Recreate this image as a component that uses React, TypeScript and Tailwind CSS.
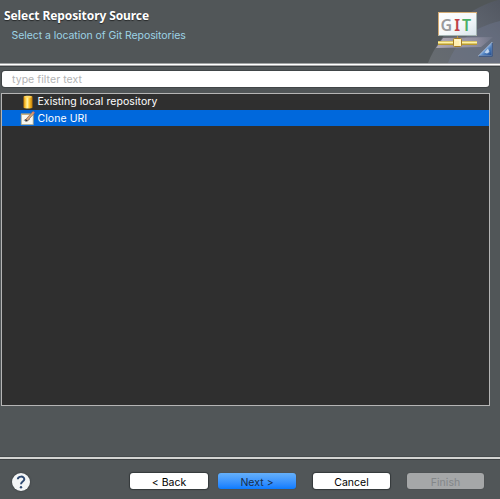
import React from "react";

function GitBanner() {
  return (
    <svg width="76" height="63" viewBox="0 0 76 63" className="shrink-0" aria-label="Git">
      <defs>
        <linearGradient id="sheen" x1="0" y1="1" x2="1" y2="0">
          <stop offset="0" stopColor="#676c70" />
          <stop offset="0.55" stopColor="#606670" />
          <stop offset="1" stopColor="#525761" />
        </linearGradient>
        <linearGradient id="card" x1="0" y1="0" x2="1" y2="1">
          <stop offset="0" stopColor="#ffffff" />
          <stop offset="0.55" stopColor="#f5f8fa" />
          <stop offset="1" stopColor="#d7e3ea" />
        </linearGradient>
        <linearGradient id="shadow" x1="0" y1="0" x2="1" y2="0">
          <stop offset="0" stopColor="#c8bdca" stopOpacity="0.75" />
          <stop offset="0.7" stopColor="#aaa3b5" stopOpacity="0.6" />
          <stop offset="1" stopColor="#a49fb5" stopOpacity="0.1" />
        </linearGradient>
        <linearGradient id="corner" x1="0" y1="0" x2="1" y2="1">
          <stop offset="0.4" stopColor="#a5c6ec" />
          <stop offset="0.65" stopColor="#4b7dbd" />
          <stop offset="1" stopColor="#1f4788" />
        </linearGradient>
      </defs>
      <path d="M4 63C15 35 39 10 74 0H76V63Z" fill="url(#sheen)" />
      <path d="M24 63C31 43 49 27 76 21V63Z" fill="#7986a4" opacity="0.28" />
      <path d="M12 48L19 38L69 37L57 47Z" fill="url(#shadow)" />
      <rect x="14.5" y="12.5" width="38" height="23" fill="url(#card)" stroke="#d6ad75" />
      <path d="M14.5 35.5H52.5V14" fill="none" stroke="#a3b4b3" />
      <g fontFamily="Noto Sans, sans-serif" fontSize="16" fontWeight="600">
        <text x="16.5" y="31" fill="#999a9c">G</text>
        <text x="30.2" y="31" fill="#be4248">I</text>
        <text x="38.1" y="31" fill="#4caf66">T</text>
      </g>
      <path d="M33.5 36V39" stroke="#bd9242" />
      <rect x="14" y="41" width="39" height="4" fill="#b9992d" />
      <path d="M14 42.5H53" stroke="#fff4a5" strokeWidth="1.8" />
      <rect x="29.5" y="38.5" width="8" height="8" rx="1" fill="#ffefb0" stroke="#a57d25" />
      <path d="M31 40H36V45" fill="none" stroke="#fff8d7" />
      <path d="M54.5 55.8L68 42.3V55.8Z" fill="url(#corner)" stroke="#b5cbe6" strokeWidth="0.6" />
      <path d="M60.5 52.5L64 48.5L65.5 52L63 53.5Z" fill="#e8f3fd" opacity="0.75" />
      <path d="M68.2 43V56.2H55" fill="none" stroke="#24457c" strokeWidth="0.9" />
    </svg>
  );
}

function DatabaseIcon() {
  return (
    <svg width="15" height="16" viewBox="0 0 15 16">
      <defs>
        <linearGradient id="gold">
          <stop stopColor="#d78608" />
          <stop offset="0.25" stopColor="#ffd347" />
          <stop offset="0.42" stopColor="#fff3aa" />
          <stop offset="0.65" stopColor="#ffc52b" />
          <stop offset="1" stopColor="#c07806" />
        </linearGradient>
      </defs>
      <path d="M3.5 2.8C3.5 1.4 12.5 1.4 12.5 2.8V13.5C12.5 14.9 3.5 14.9 3.5 13.5Z" fill="url(#gold)" />
      <ellipse cx="8" cy="2.9" rx="3.8" ry="0.8" fill="#ffdb68" />
    </svg>
  );
}

function CloneIcon() {
  return (
    <svg width="15" height="16" viewBox="0 0 15 16">
      <rect x="1.2" y="4" width="12" height="10.7" fill="#f8f7ee" stroke="#aaa37e" strokeWidth="0.8" />
      <path d="M1 4.3H10" stroke="#c6ad7b" strokeWidth="1.3" />
      <path d="M4 11L5.5 9L6.5 11.5L10 9" fill="none" stroke="#67747b" strokeWidth="0.7" />
      <path d="M5.6 9.6L12.6 1.8L14.3 3.3L7.3 11Z" fill="#d4a578" stroke="#80533f" strokeWidth="0.6" />
      <path d="M5 11.5L5.8 9.2L7.7 10.8Z" fill="#24262b" />
      <path d="M12 2.5L13.3 1.2L14.8 2.6L13.5 4Z" fill="#d8796b" />
    </svg>
  );
}

export default function App() {
  return (
    <main className="flex h-[499px] w-[500px] flex-col overflow-hidden bg-[#515658] font-['Inter','Liberation_Sans',sans-serif] text-[10.5px] tracking-[0.03px]">
      <header className="flex h-[63px] shrink-0 justify-between">
        <div className="flex w-[424px] flex-col pt-[7px]">
          <h1 className="pl-[4px] font-['Noto_Sans',sans-serif] text-[12px] leading-[18px] font-bold tracking-[-0.09px] whitespace-nowrap text-white [text-shadow:0_1px_1px_#0008]">Select Repository Source</h1>
          <p className="pl-[11.5px] leading-[22px] tracking-[-0.06px] whitespace-nowrap text-[#9dd3e5]">Select a location of Git Repositories</p>
        </div>
        <GitBanner />
      </header>
      <div className="h-[4px] shrink-0 border-t border-b border-t-[#a1a3a4] border-b-[#3d4244] bg-white">
        <div className="mt-px h-px bg-[#adadae]" />
      </div>
      <section className="flex h-[390px] shrink-0 flex-col pt-[4px]">
        <input aria-label="Filter" placeholder="type filter text" className="ml-[2px] block h-[16px] w-[487px] shrink-0 rounded-[3px] bg-white pt-px pl-[10px] tracking-[0.05px] text-[#333] shadow-[0_0_0_1px_#404547] outline-none placeholder:text-[#b2b3b4] placeholder:opacity-100" />
        <div className="mt-[6px] ml-px h-[313px] w-[489px] shrink-0 border border-[#b5b5b5] bg-[#2f2f2f] text-white">
          <div className="flex h-[16px] items-center pl-[18px] leading-[16px]">
            <DatabaseIcon />
            <span className="ml-[2.5px] tracking-[0.06px]">Existing local repository</span>
          </div>
          <div className="flex h-[16px] items-center bg-[#0068dc] pl-[18px] leading-[16px]">
            <CloneIcon />
            <span className="ml-[2.5px] pt-[2px] tracking-[0.06px]">Clone URI</span>
          </div>
        </div>
      </section>
      <footer className="flex h-[42px] shrink-0 items-start border-t-2 border-[#d3d4d2] pt-[14px] pl-[12px] shadow-[0_-1px_0_#454a4c,inset_0_1px_0_#3d4143]">
        <button className="flex size-[18px] shrink-0 items-center justify-center rounded-full bg-[#f3f5f6] text-[#304b72] shadow-[0_0_2px_#2d3336]" aria-label="Help">
          <svg width="18" height="18" viewBox="0 0 18 18">
            <path d="M5.8 6.3C6 2.8 12.3 2.7 12.3 6.2C12.3 8.6 9 8.4 9 11.2" fill="none" stroke="currentColor" strokeWidth="2" />
            <circle cx="9" cy="14.2" r="1.2" fill="currentColor" />
          </svg>
        </button>
        <button className="ml-[100px] h-[16px] w-[78px] rounded-[3px] bg-white leading-[20px] text-black shadow-[0_0_1px_1px_#34393b]">&lt; Back</button>
        <button className="ml-[10px] h-[16px] w-[78px] rounded-[3px] bg-gradient-to-b from-[#65b0fa] to-[#087bff] leading-[20px] text-[#152e4c] shadow-[0_0_1px_#34393b]">Next &gt;</button>
        <button className="ml-[17px] h-[16px] w-[77px] rounded-[3px] bg-white leading-[20px] text-black shadow-[0_0_1px_1px_#34393b]">Cancel</button>
        <button disabled className="ml-[17px] h-[16px] w-[77px] rounded-[3px] bg-[#a5a7a8] leading-[20px] text-[#838688] shadow-[0_0_1px_#34393b]">Finish</button>
      </footer>
    </main>
  );
}
